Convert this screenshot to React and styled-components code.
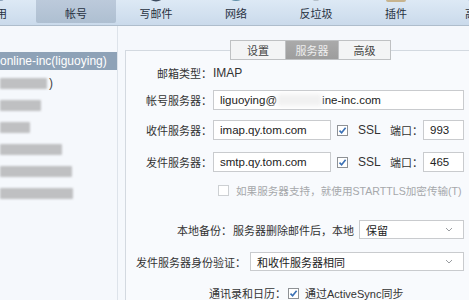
import React from 'react';
import styled, { createGlobalStyle } from 'styled-components';

const Global = createGlobalStyle`
  html, body { margin: 0; padding: 0; }
  body {
    background: #f5f8fc;
    font-family: "Liberation Sans", "Noto Sans CJK SC", sans-serif;
    font-size: 11px;
    color: #2a2a2a;
    overflow: hidden;
  }
`;

const Page = styled.div`
  width: 469px;
  height: 300px;
  overflow: hidden;
  display: flex;
  flex-direction: column;
`;

const Toolbar = styled.div`
  flex: none;
  height: 25px;
  background: linear-gradient(#dde9f5, #cadaeb);
  border-bottom: 1px solid #aebdcc;
  overflow: hidden;
  display: flex;
`;

const ToolTrack = styled.div`
  display: flex;
  margin-left: -44px;
`;

const ToolItem = styled.div`
  flex: none;
  width: 80px;
  height: 23px;
  display: flex;
  flex-direction: column;
  align-items: center;
  border-radius: 0 0 2px 2px;
  background: ${p => (p.$active ? 'linear-gradient(#bccadb, #aebfd1)' : 'transparent')};
`;

const ToolIcon = styled.div`
  height: 22px;
  margin-top: -20px;
  display: flex;
  align-items: flex-end;
`;

const ToolLabel = styled.div`
  margin-top: 5px;
  line-height: 14px;
  font-size: 11px;
  color: #27313f;
  white-space: nowrap;
`;

const Body = styled.div`
  flex: 1;
  min-height: 0;
  display: flex;
  gap: 7px;
`;

const List = styled.div`
  flex: none;
  width: 117px;
  border-right: 1px solid #dde3ea;
  padding-top: 26px;
  display: flex;
  flex-direction: column;
  gap: 4px;
  overflow: hidden;
`;

const ListRow = styled.div`
  flex: none;
  height: 18px;
  display: flex;
  align-items: center;
  white-space: nowrap;
  overflow: hidden;
  font-size: 12px;
  color: ${p => (p.$selected ? '#ffffff' : '#333')};
  background: ${p => (p.$selected ? '#8ea2b7' : 'transparent')};
`;

const BlurBar = styled.div`
  height: 11px;
  background: #bfc0c2;
  filter: blur(1.2px);
  border-radius: 1px;
`;

const Paren = styled.span`
  margin-left: 2px;
  color: #444;
`;

const Panel = styled.div`
  flex: 1;
  margin-top: 24px;
  border-left: 1px solid #d3d9e0;
  border-top: 1px solid #d3d9e0;
  background: #f8fafd;
  display: flex;
  flex-direction: column;
`;

const Tabs = styled.div`
  display: flex;
  margin-top: -11px;
  margin-left: 104px;
`;

const Tab = styled.div`
  flex: none;
  width: ${p => p.$w}px;
  height: 20px;
  box-sizing: border-box;
  border: 1px solid #bfc1c3;
  margin-left: -1px;
  display: flex;
  align-items: center;
  justify-content: center;
  color: ${p => (p.$active ? '#eeeeee' : '#444')};
  background: ${p => (p.$active ? 'linear-gradient(#aaaaaa, #9d9d9d)' : '#f3f4f5')};
  &:first-child { margin-left: 0; }
`;

const Row = styled.div`
  flex: none;
  display: flex;
  align-items: center;
  height: ${p => p.$h}px;
  margin-top: ${p => p.$top}px;
  padding-left: ${p => p.$pad || 0}px;
  white-space: nowrap;
`;

const Label = styled.div`
  flex: none;
  width: ${p => p.$w}px;
  text-align: right;
  color: #333;
`;

const Value = styled.span`
  flex: none;
  display: inline-block;
  width: ${p => (p.$w ? `${p.$w}px` : 'auto')};
  margin-left: ${p => p.$ml || 0}px;
  color: ${p => (p.$muted ? '#a6a8ab' : '#333')};
  font-size: ${p => (p.$latin ? '12px' : p.$small ? '10.6px' : 'inherit')};
`;

const Input = styled.div`
  flex: none;
  box-sizing: border-box;
  width: ${p => p.$w}px;
  height: 20px;
  margin-left: ${p => p.$ml || 0}px;
  background: #ffffff;
  border: 1px solid #c9cbce;
  padding-left: 6px;
  display: flex;
  align-items: center;
  font-size: 11.5px;
  color: #222;
  overflow: hidden;
`;

const Smudge = styled.span`
  display: inline-block;
  width: 45px;
  height: 12px;
  background: #f1f1f1;
  filter: blur(2px);
`;

const Box = styled.div`
  flex: none;
  box-sizing: border-box;
  width: 11px;
  height: 11px;
  margin-left: ${p => p.$ml || 0}px;
  background: #ffffff;
  border: 1px solid ${p => (p.$disabled ? '#cdd0d3' : '#8e9195')};
  display: flex;
  align-items: center;
  justify-content: center;
`;

const Select = styled.div`
  flex: none;
  box-sizing: border-box;
  width: ${p => p.$w}px;
  height: 19px;
  margin-left: ${p => p.$ml || 0}px;
  background: #ffffff;
  border: 1px solid #c9cbce;
  padding: 0 10px 0 6px;
  display: flex;
  align-items: center;
  justify-content: space-between;
  color: #222;
`;

const Check = () => (
  <svg width="9" height="9" viewBox="0 0 9 9">
    <path d="M1.5 4.6 L3.6 6.8 L7.6 1.8" fill="none" stroke="#3a70b5" strokeWidth="1.6" />
  </svg>
);

const Chevron = () => (
  <svg width="8" height="5" viewBox="0 0 8 5">
    <path d="M1 1 L4 4 L7 1" fill="none" stroke="#9a9da1" strokeWidth="1" />
  </svg>
);

const icons = [
  <svg width="20" height="22" viewBox="0 0 20 22"><rect x="2" y="0" width="16" height="21" rx="3" fill="#8aa0b8" /></svg>,
  <svg width="20" height="22" viewBox="0 0 20 22"><rect x="3" y="0" width="14" height="19" rx="3" fill="#9fb1c4" /></svg>,
  <svg width="22" height="22" viewBox="0 0 22 22"><ellipse cx="11" cy="11" rx="10" ry="10.5" fill="#3d4b5f" /></svg>,
  <svg width="20" height="22" viewBox="0 0 20 22"><circle cx="10" cy="10" r="11" fill="#5f8fa8" /></svg>,
  <svg width="20" height="22" viewBox="0 0 20 22"><circle cx="10" cy="10" r="10.5" fill="#8e979f" /></svg>,
  <svg width="22" height="22" viewBox="0 0 22 22"><rect x="1" y="0" width="20" height="22" rx="2" fill="#c7b48f" /></svg>,
  <svg width="20" height="22" viewBox="0 0 20 22"><rect x="2" y="0" width="16" height="21" rx="3" fill="#4f86c6" /></svg>,
];

const tools = ['常用', '帐号', '写邮件', '网络', '反垃圾', '插件', '高级'];

const blurRows = [47, 41, 30, 62, 72, 73];

export default function App() {
  return (
    <Page>
      <Global />
      <Toolbar>
        <ToolTrack>
          {tools.map((t, i) => (
            <ToolItem key={t} $active={i === 1}>
              <ToolIcon>{icons[i]}</ToolIcon>
              <ToolLabel>{t}</ToolLabel>
            </ToolItem>
          ))}
        </ToolTrack>
      </Toolbar>
      <Body>
        <List>
          <ListRow $selected>online-inc(liguoying)</ListRow>
          {blurRows.map((w, i) => (
            <ListRow key={i}>
              <BlurBar style={{ width: `${w}px` }} />
              {i === 0 && <Paren>)</Paren>}
            </ListRow>
          ))}
        </List>
        <Panel>
          <Tabs>
            <Tab $w={56}>设置</Tab>
            <Tab $w={54} $active>服务器</Tab>
            <Tab $w={53}>高级</Tab>
          </Tabs>
          <Row $top={4} $h={18}>
            <Label $w={86}>邮箱类型：</Label>
            <Value $ml={1} $latin>IMAP</Value>
          </Row>
          <Row $top={8} $h={20}>
            <Label $w={86}>帐号服务器：</Label>
            <Input $w={251} $ml={1}>
              liguoying@<Smudge />ine-inc.com
            </Input>
          </Row>
          <Row $top={10} $h={20}>
            <Label $w={86}>收件服务器：</Label>
            <Input $w={118} $ml={1}>imap.qy.tom.com</Input>
            <Box $ml={6}><Check /></Box>
            <Value $ml={10} $w={32} $latin>SSL</Value>
            <Value $w={33}>端口：</Value>
            <Input $w={41}>993</Input>
          </Row>
          <Row $top={12} $h={20}>
            <Label $w={86}>发件服务器：</Label>
            <Input $w={118} $ml={1}>smtp.qy.tom.com</Input>
            <Box $ml={6}><Check /></Box>
            <Value $ml={10} $w={32} $latin>SSL</Value>
            <Value $w={33}>端口：</Value>
            <Input $w={41}>465</Input>
          </Row>
          <Row $top={11} $h={14} $pad={92}>
            <Box $disabled />
            <Value $ml={7} $muted $small>如果服务器支持，就使用STARTTLS加密传输(T)</Value>
          </Row>
          <Row $top={23} $h={19}>
            <Label $w={106}>本地备份：</Label>
            <Value $ml={1}>服务器删除邮件后，本地</Value>
            <Select $w={105} $ml={5}>保留<Chevron /></Select>
          </Row>
          <Row $top={13} $h={19}>
            <Label $w={120}>发件服务器身份验证：</Label>
            <Select $w={214} $ml={4}>和收件服务器相同<Chevron /></Select>
          </Row>
          <Row $top={14} $h={16}>
            <Label $w={160}>通讯录和日历：</Label>
            <Box $ml={2}><Check /></Box>
            <Value $ml={6}>通过ActiveSync同步</Value>
          </Row>
        </Panel>
      </Body>
    </Page>
  );
}
